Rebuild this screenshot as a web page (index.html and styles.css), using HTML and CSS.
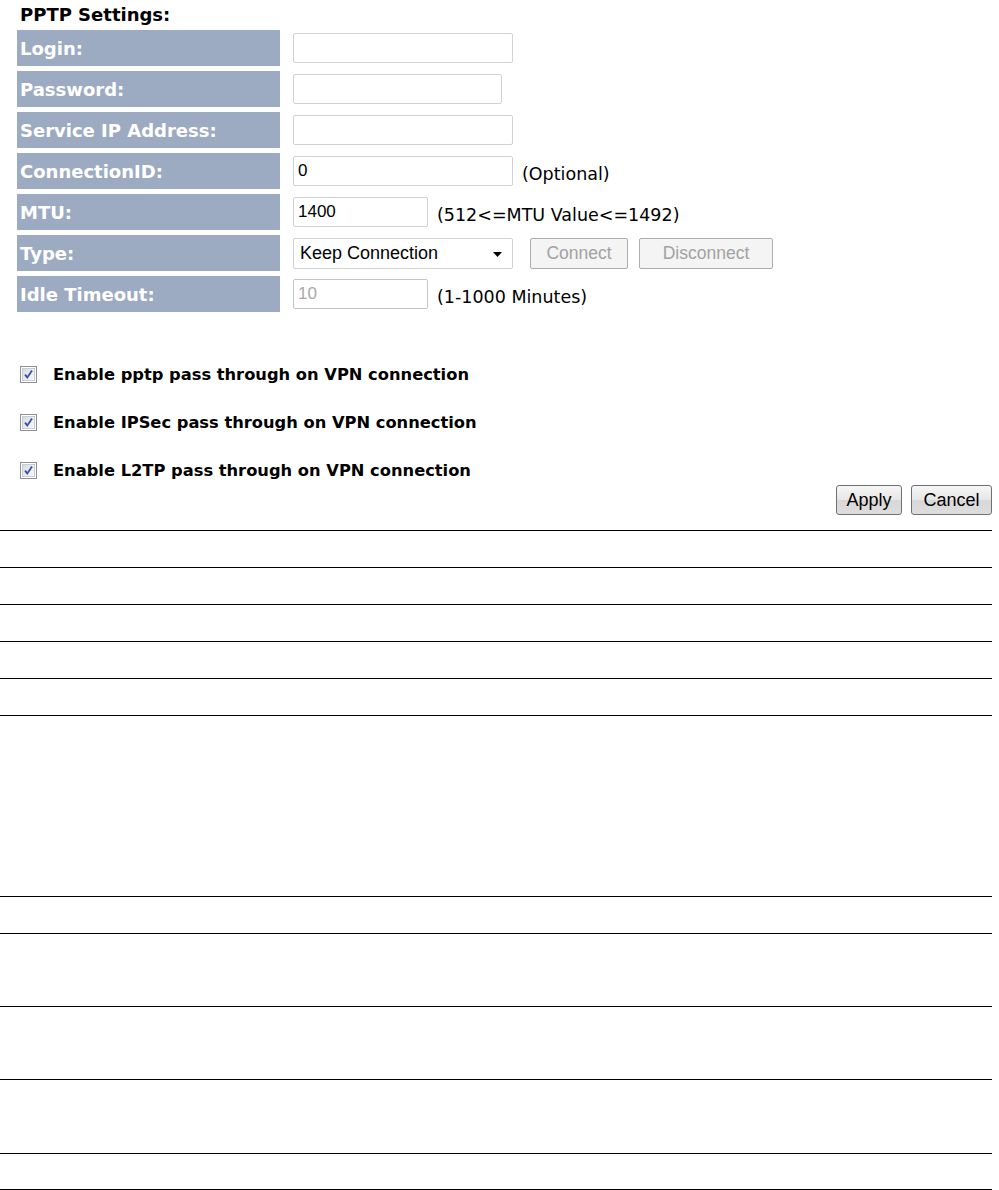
FILE: index.html
```html
<!DOCTYPE html>
<html>
<head>
    <link rel="stylesheet" href="styles.css">
</head>
<body>
    <div class="page">
        <div class="title">PPTP Settings:</div>

        <div class="settings">
            <div class="row">
                <div class="label">Login:</div>
                <div class="field"><input class="text long" type="text" value=""></div>
            </div>
            <div class="row">
                <div class="label">Password:</div>
                <div class="field"><input class="text medium" type="password" value=""></div>
            </div>
            <div class="row">
                <div class="label">Service IP Address:</div>
                <div class="field"><input class="text long" type="text" value=""></div>
            </div>
            <div class="row">
                <div class="label">ConnectionID:</div>
                <div class="field">
                    <input class="text long" type="text" value="0">
                    <span class="hint">(Optional)</span>
                </div>
            </div>
            <div class="row">
                <div class="label">MTU:</div>
                <div class="field">
                    <input class="text short" type="text" value="1400">
                    <span class="hint">(512&lt;=MTU Value&lt;=1492)</span>
                </div>
            </div>
            <div class="row">
                <div class="label">Type:</div>
                <div class="field">
                    <span class="select-wrap">
                        <select class="select">
                            <option>Keep Connection</option>
                            <option>Auto Connect</option>
                            <option>Manual</option>
                        </select>
                        <svg class="arrow" width="9" height="5" viewBox="0 0 9 5"><path d="M0 0h9L4.5 5z" fill="#000"/></svg>
                    </span>
                    <button class="btn-off connect" disabled>Connect</button>
                    <button class="btn-off disconnect" disabled>Disconnect</button>
                </div>
            </div>
            <div class="row">
                <div class="label">Idle Timeout:</div>
                <div class="field">
                    <input class="text short" type="text" value="10" disabled>
                    <span class="hint">(1-1000 Minutes)</span>
                </div>
            </div>
        </div>

        <div class="options">
            <label class="option">
                <span class="check">
                    <svg width="17" height="17" viewBox="0 0 17 17">
                        <defs>
                            <linearGradient id="cb" x1="0" y1="0" x2="1" y2="1">
                                <stop offset="0" stop-color="#d6d9de"/>
                                <stop offset="1" stop-color="#fbfbfb"/>
                            </linearGradient>
                        </defs>
                        <rect x="0.5" y="0.5" width="16" height="16" fill="#fff" stroke="#8e8f8f"/>
                        <rect x="2.5" y="2.5" width="12" height="12" fill="url(#cb)" stroke="#c9ccd2"/>
                        <path d="M5 8.6l2.3 2.8L12 4.6" fill="none" stroke="#3a52a8" stroke-width="1.8"/>
                    </svg>
                </span>
                Enable pptp pass through on VPN connection
            </label>
            <label class="option">
                <span class="check">
                    <svg width="17" height="17" viewBox="0 0 17 17">
                        <rect x="0.5" y="0.5" width="16" height="16" fill="#fff" stroke="#8e8f8f"/>
                        <rect x="2.5" y="2.5" width="12" height="12" fill="url(#cb)" stroke="#c9ccd2"/>
                        <path d="M5 8.6l2.3 2.8L12 4.6" fill="none" stroke="#3a52a8" stroke-width="1.8"/>
                    </svg>
                </span>
                Enable IPSec pass through on VPN connection
            </label>
            <label class="option">
                <span class="check">
                    <svg width="17" height="17" viewBox="0 0 17 17">
                        <rect x="0.5" y="0.5" width="16" height="16" fill="#fff" stroke="#8e8f8f"/>
                        <rect x="2.5" y="2.5" width="12" height="12" fill="url(#cb)" stroke="#c9ccd2"/>
                        <path d="M5 8.6l2.3 2.8L12 4.6" fill="none" stroke="#3a52a8" stroke-width="1.8"/>
                    </svg>
                </span>
                Enable L2TP pass through on VPN connection
            </label>
        </div>

        <div class="actions">
            <button class="btn apply">Apply</button>
            <button class="btn cancel">Cancel</button>
        </div>

        <div class="rules">
            <div class="rule h36"></div>
            <div class="rule h36"></div>
            <div class="rule h36"></div>
            <div class="rule h36"></div>
            <div class="rule h36"></div>
            <div class="rule h180"></div>
            <div class="rule h36"></div>
            <div class="rule h72"></div>
            <div class="rule h72"></div>
            <div class="rule h73"></div>
            <div class="rule h35 last"></div>
        </div>
    </div>
</body>
</html>
```

FILE: styles.css
```css
body {
    margin: 0;
    background-color: #ffffff;
    font-family: "DejaVu Sans", Verdana, sans-serif;
    color: #000000;
}

.page {
    width: 992px;
}

.title {
    padding: 4px 0 0 20px;
    height: 26px;
    line-height: 22px;
    font-size: 18px;
    font-weight: bold;
    box-sizing: border-box;
}

.settings {
    display: flex;
    flex-direction: column;
    gap: 5px;
    margin-top: 4px;
    padding-left: 17px;
}

.row {
    display: flex;
    height: 36px;
}

.label {
    width: 263px;
    background-color: #9dabc2;
    color: #ffffff;
    font-weight: bold;
    font-size: 18px;
    padding-left: 3px;
    box-sizing: border-box;
    display: flex;
    align-items: center;
}

.field {
    display: flex;
    align-items: center;
    padding-left: 13px;
}

.text {
    height: 30px;
    box-sizing: border-box;
    border: 1px solid #cfd1d4;
    border-radius: 2px;
    padding: 0 4px;
    font-family: "Liberation Sans", Arial, sans-serif;
    font-size: 17px;
    color: #000000;
    background: #ffffff;
    outline: none;
}

.text:disabled {
    color: #a8a8a8;
    border-color: #c3c5c8;
}

.long { width: 220px; }
.medium { width: 209px; }
.short { width: 135px; }

.hint {
    margin-left: 9px;
    font-size: 17.5px;
    padding-top: 6px;
}

.select-wrap {
    position: relative;
    display: inline-block;
}

.select {
    appearance: none;
    -webkit-appearance: none;
    width: 220px;
    height: 31px;
    box-sizing: border-box;
    border: 1px solid #cfd1d4;
    border-radius: 2px;
    background: #ffffff;
    padding: 0 6px;
    font-family: "Liberation Sans", Arial, sans-serif;
    font-size: 18px;
    color: #000000;
    outline: none;
}

.arrow {
    position: absolute;
    right: 11px;
    top: 14px;
    pointer-events: none;
}

.btn-off {
    height: 31px;
    box-sizing: border-box;
    border: 1px solid #adadad;
    border-radius: 2px;
    background-color: #f4f4f4;
    color: #a2a2a2;
    font-family: "Liberation Sans", Arial, sans-serif;
    font-size: 17.5px;
    padding: 0;
}

.connect {
    width: 98px;
    margin-left: 17px;
}

.disconnect {
    width: 134px;
    margin-left: 11px;
}

.options {
    display: flex;
    flex-direction: column;
    gap: 24px;
    margin-top: 50px;
    padding-left: 20px;
}

.option {
    display: flex;
    align-items: center;
    height: 24px;
    font-size: 16.3px;
    font-weight: bold;
}

.check {
    display: flex;
    width: 17px;
    height: 17px;
    margin-right: 16px;
}

.actions {
    display: flex;
    justify-content: flex-end;
    gap: 9px;
    margin-top: 3px;
}

.btn {
    height: 30px;
    box-sizing: border-box;
    border: 1px solid #707070;
    border-radius: 3px;
    background: linear-gradient(#f6f6f6, #e6e6e6 50%, #d8d8d8 51%, #dddddd);
    font-family: "Liberation Sans", Arial, sans-serif;
    font-size: 18px;
    color: #000000;
    padding: 0;
}

.apply { width: 66px; }
.cancel { width: 81px; }

.rules {
    margin-top: 15px;
}

.rule {
    border-top: 1px solid #000000;
}

.rule.last {
    border-bottom: 1px solid #000000;
}

.h35 { height: 35px; }
.h36 { height: 36px; }
.h72 { height: 72px; }
.h73 { height: 73px; }
.h180 { height: 180px; }
```
